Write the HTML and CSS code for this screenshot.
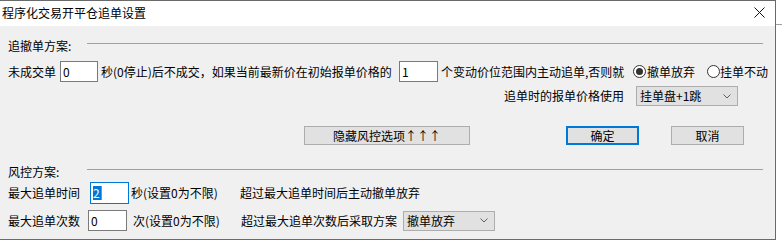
FILE: index.html
```html
<!DOCTYPE html>
<html lang="zh-CN">
<head>
<meta charset="utf-8">
<title>程序化交易开平仓追单设置</title>
<link rel="stylesheet" href="styles.css">
</head>
<body>
<div class="dialog">
  <div class="titlebar">
    <span class="title">程序化交易开平仓追单设置</span>
    <svg class="close" width="11" height="11" viewBox="0 0 11 11"><path d="M0.5 0.5 L10.5 10.5 M10.5 0.5 L0.5 10.5" stroke="#111" stroke-width="1" fill="none"/></svg>
  </div>
  <div class="content">
    <div class="sec sec1">
      <span class="sec-label">追撤单方案:</span>
      <span class="sec-line"></span>
    </div>
    <div class="row row1">
      <span class="lbl w-a">未成交单</span>
      <div class="edit e1"><span>0</span></div>
      <span class="txt w-b">秒(0停止)后不成交，如果当前最新价在初始报单价格的</span>
      <div class="edit e2"><span>1</span></div>
      <span class="txt w-c">个变动价位范围内主动追单,否则就</span>
      <span class="radio checked"></span>
      <span class="rlabel w-d">撤单放弃</span>
      <span class="radio"></span>
      <span class="rlabel">挂单不动</span>
    </div>
    <div class="row row2">
      <span class="lbl w-e">追单时的报单价格使用</span>
      <div class="combo c1"><span>挂单盘+1跳</span><svg class="chev" width="8" height="5" viewBox="0 0 8 5"><path d="M0.5 0.5 L4 4 L7.5 0.5" stroke="#606060" fill="none"/></svg></div>
    </div>
    <div class="row row3">
      <div class="btn b-hide">隐藏风控选项↑↑↑</div>
      <div class="btn b-ok">确定</div>
      <div class="btn b-cancel">取消</div>
    </div>
    <div class="sec sec2">
      <span class="sec-label">风控方案:</span>
      <span class="sec-line"></span>
    </div>
    <div class="row row4">
      <span class="lbl w-f">最大追单时间</span>
      <div class="edit e3 focus"><span class="sel">2</span><span class="caret"></span></div>
      <span class="txt w-g">秒(设置0为不限)</span>
      <span class="txt">超过最大追单时间后主动撤单放弃</span>
    </div>
    <div class="row row5">
      <span class="lbl w-h">最大追单次数</span>
      <div class="edit e4"><span>0</span></div>
      <span class="txt w-i">次(设置0为不限)</span>
      <span class="txt w-j">超过最大追单次数后采取方案</span>
      <div class="combo c2"><span>撤单放弃</span><svg class="chev" width="8" height="5" viewBox="0 0 8 5"><path d="M0.5 0.5 L4 4 L7.5 0.5" stroke="#606060" fill="none"/></svg></div>
    </div>
  </div>
</div>
</body>
</html>
```
FILE: styles.css
```css
html, body {
  margin: 0;
  padding: 0;
}
body {
  width: 782px;
  height: 241px;
  overflow: hidden;
  background: #ffffff linear-gradient(#a0a0a0, #a0a0a0) no-repeat 776px 24px / 6px 1px;
  font-family: "Noto Sans CJK SC", "Noto Sans", sans-serif;
  font-size: 12px;
  color: #000;
}
.dialog {
  width: 775px;
  height: 238px;
  border-top: 1px solid #6a6a6a;
  border-right: 1px solid #6a6a6a;
  border-bottom: 1px solid #6a6a6a;
  display: flex;
  flex-direction: column;
}
.titlebar {
  height: 25px;
  background: #fff;
  display: flex;
  align-items: center;
  justify-content: space-between;
  padding: 0 10px 0 2px;
  box-sizing: border-box;
}
.title {
  font-size: 12px;
  line-height: 12px;
  margin-top: -1px;
}
.close {
  display: block;
  margin-top: -2px;
}
.content {
  flex: 1;
  background: #f0f0f0;
  padding-left: 8px;
  display: flex;
  flex-direction: column;
}
.sec {
  height: 16px;
  display: flex;
  align-items: center;
}
.sec1 { margin-top: 12px; }
.sec2 { margin-top: 19px; }
.sec-label {
  width: 79px;
  line-height: 16px;
  white-space: nowrap;
}
.sec-line {
  align-self: flex-start;
  margin-top: 5px;
  width: 676px;
  height: 0;
  border-top: 1px solid #a0a0a0;
}
.row {
  display: flex;
  align-items: center;
  white-space: nowrap;
}
.row1 { margin-top: 7px; height: 21px; }
.row2 { margin-top: 4px; height: 20px; padding-left: 496px; }
.row3 { margin-top: 20px; height: 19px; padding-left: 296px; }
.row4 { margin-top: 2px; height: 22px; }
.row5 { margin-top: 6px; height: 21px; }
.lbl, .txt, .rlabel {
  line-height: 14px;
  flex: none;
}
.w-a { width: 52px; }
.w-b { width: 298px; padding-left: 3px; }
.w-c { width: 192px; padding-left: 3px; }
.w-d { width: 60px; padding-left: 1px; }
.w-e { width: 132px; }
.w-f { width: 82px; }
.w-g { width: 109px; padding-left: 2px; }
.w-h { width: 80px; }
.w-i { width: 108px; padding-left: 6px; }
.w-j { width: 162px; }
.edit {
  flex: none;
  box-sizing: border-box;
  height: 21px;
  background: #fff;
  border: 1px solid #7a7a7a;
  display: flex;
  align-items: center;
  padding-left: 2px;
  line-height: 14px;
}
.e1 { width: 38px; }
.e2 { width: 39px; }
.e3 { width: 39px; height: 22px; }
.e4 { width: 39px; }
.edit.focus {
  border-color: #0078d7;
}
.sel {
  background: #0078d7;
  color: #fff;
  line-height: 14px;
  padding: 0 1px 0 0;
}
.caret {
  width: 1px;
  height: 14px;
  background: #e07a1f;
}
.radio {
  flex: none;
  box-sizing: border-box;
  width: 13px;
  height: 13px;
  border: 1px solid #333;
  border-radius: 50%;
  background: #fff;
  position: relative;
}
.radio.checked::after {
  content: "";
  position: absolute;
  left: 2px;
  top: 2px;
  width: 7px;
  height: 7px;
  border-radius: 50%;
  background: #333;
}
.combo {
  flex: none;
  box-sizing: border-box;
  height: 20px;
  background: #e1e1e1;
  border: 1px solid #adadad;
  display: flex;
  align-items: center;
  justify-content: space-between;
  padding: 0 6px 0 3px;
  line-height: 14px;
}
.c1 { width: 102px; }
.c2 { width: 92px; }
.chev { display: block; }
.btn {
  flex: none;
  box-sizing: border-box;
  height: 19px;
  background: #e1e1e1;
  border: 1px solid #adadad;
  display: flex;
  align-items: center;
  justify-content: center;
  line-height: 14px;
}
.b-hide { width: 166px; }
.b-ok {
  width: 73px;
  margin-left: 96px;
  border: 2px solid #0078d7;
}
.b-cancel {
  width: 73px;
  margin-left: 32px;
}
```
